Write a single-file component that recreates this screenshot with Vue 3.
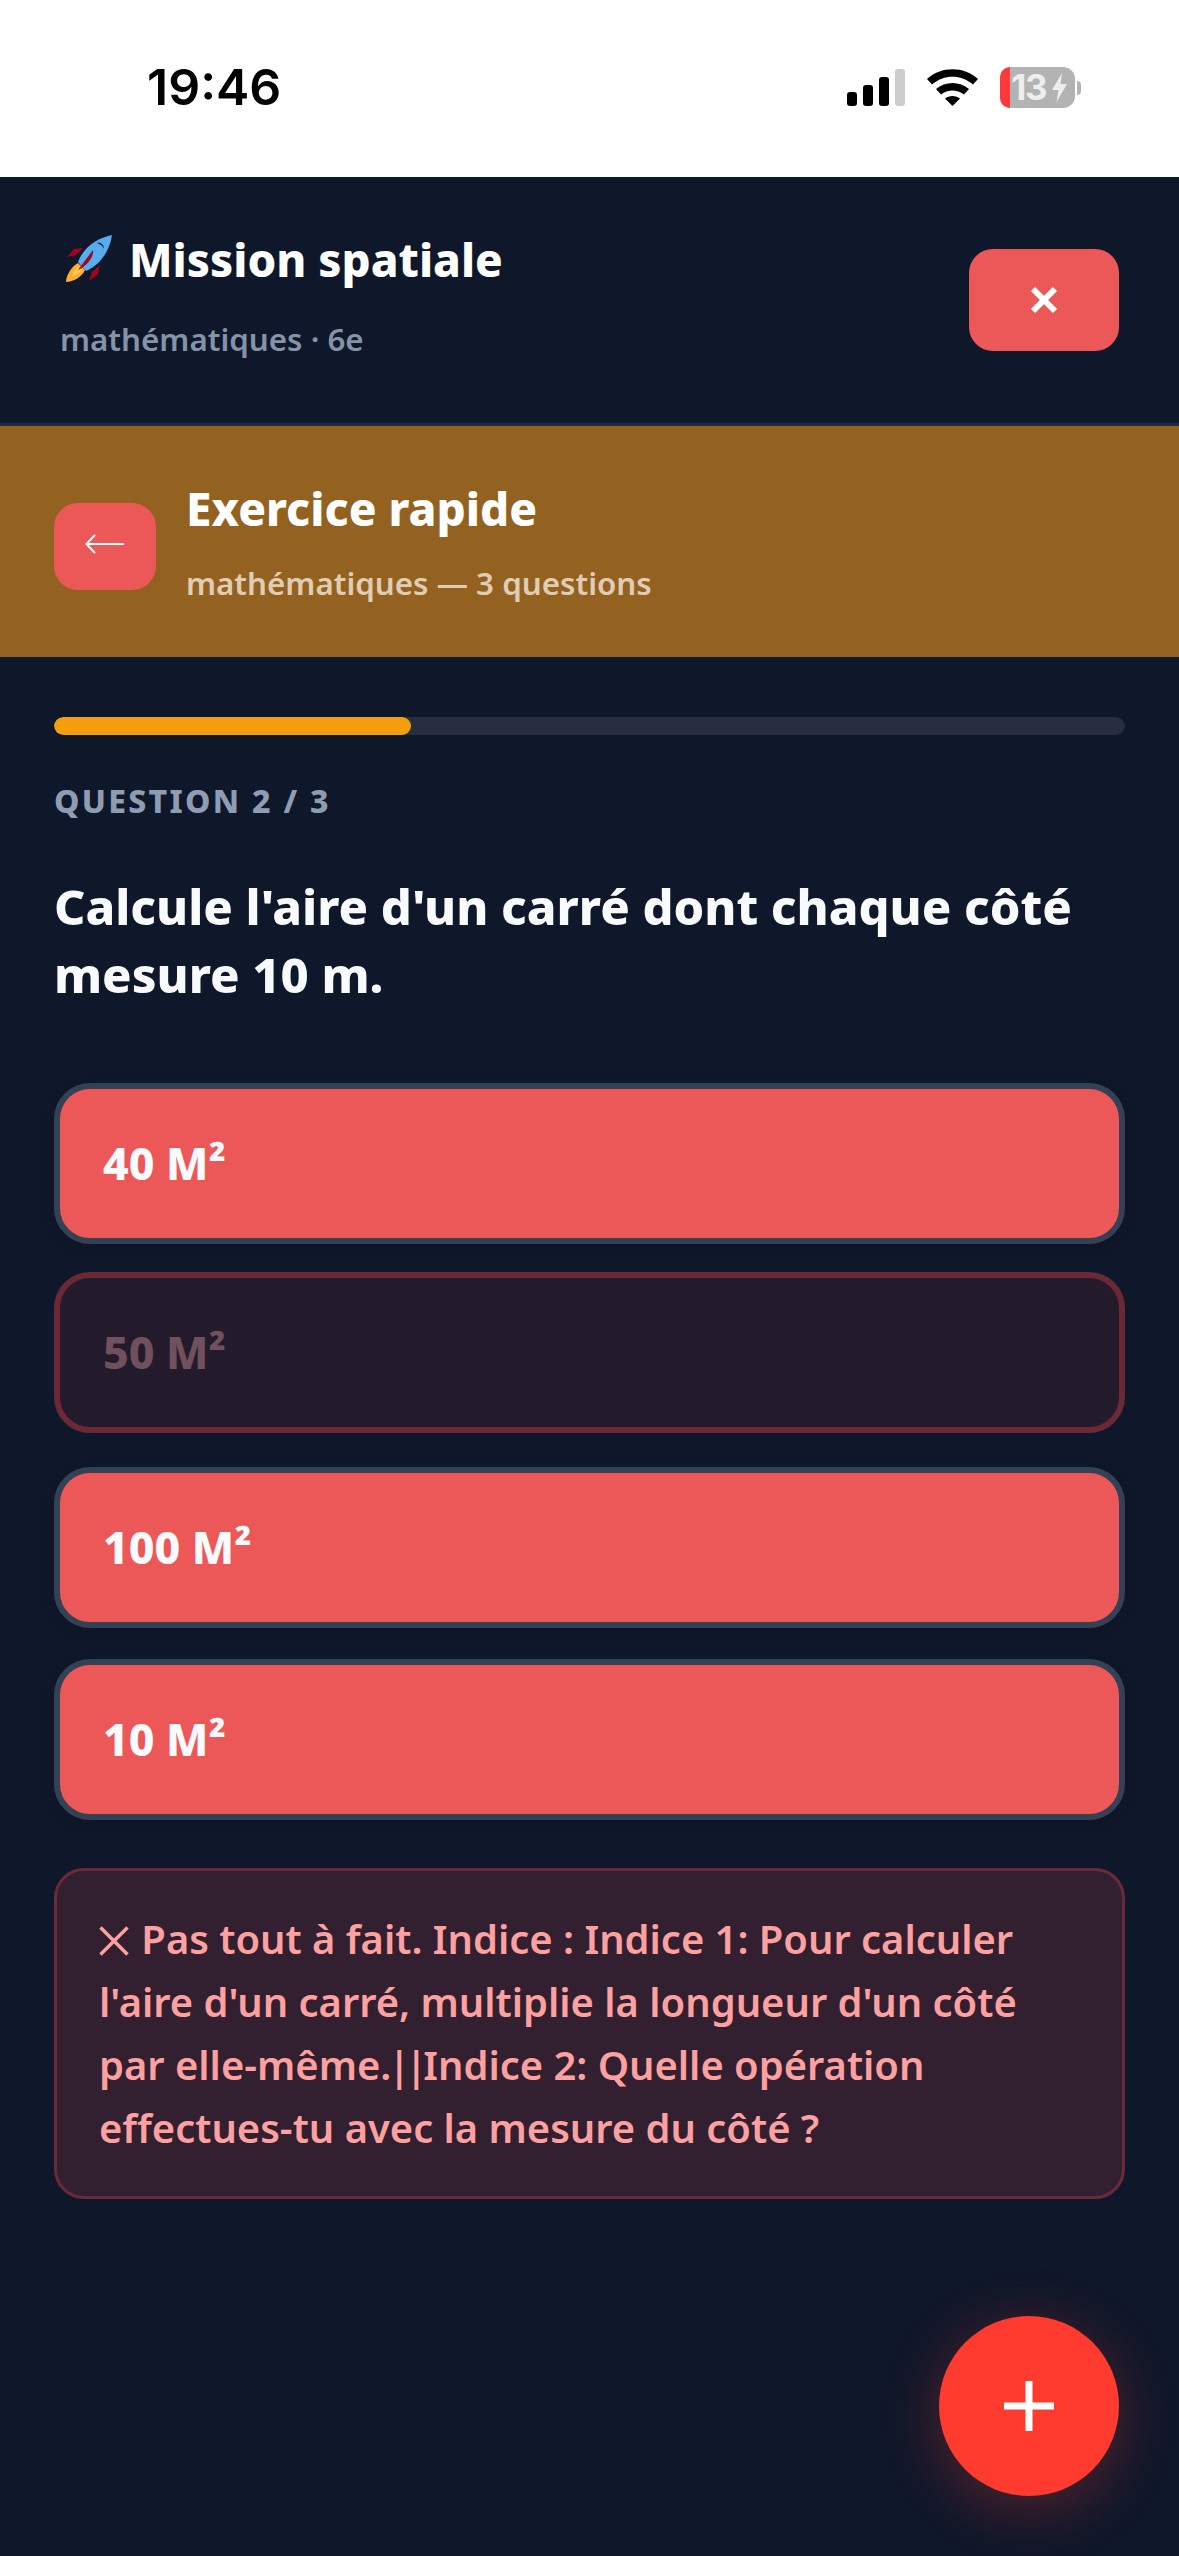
<template>
    <div class="screen">
        <header class="status-bar">
            <span class="time">19:46</span>
            <div class="status-icons">
                <svg class="signal" width="58" height="37" viewBox="0 0 58 37">
                    <rect x="0" y="23" width="10" height="14" rx="3" fill="#000" />
                    <rect x="16" y="16" width="10" height="21" rx="3" fill="#000" />
                    <rect x="32" y="8" width="10" height="29" rx="3" fill="#000" />
                    <rect x="48" y="0" width="10" height="37" rx="3" fill="#ccc" />
                </svg>
                <svg class="wifi" width="51" height="37" viewBox="0 0 51 37">
                    <path d="M0 10 C14 -3 37 -3 51 10 L46 15.500 C34 5 17 5 5 15.500 Z" fill="#000" />
                    <path d="M9 20 C18 12 33 12 42 20 L37 25.500 C30 20 21 20 14 25.500 Z" fill="#000" />
                    <path d="M18 29.500 C22 26 29 26 33 29.500 L25.500 37 Z" fill="#000" />
                </svg>
                <div class="battery">
                    <div class="battery-body">
                        <span class="battery-level"></span>
                        <span class="battery-text">13</span>
                        <svg class="bolt" width="15" height="29" viewBox="0 0 15 29">
                            <path d="M10 0 L0 17 H6.500 L4.500 29 L15 11 H8.500 Z" fill="#eee" />
                        </svg>
                    </div>
                    <span class="battery-tip"></span>
                </div>
            </div>
        </header>

        <section class="top-bar">
            <div class="top-text">
                <h1 class="mission">
                    <svg class="rocket" width="48" height="48" viewBox="0 0 48 48">
                        <path d="M11 20 L2 22 L9 14 L18 13 Z" fill="#a0041e" />
                        <path d="M27 37 L24 46 L33 39 L35 30 Z" fill="#a0041e" />
                        <path d="M13 28 C7 31 1 40 1 47 C8 47 17 42 20 35 Z" fill="#ffac33" />
                        <path d="M13 31 C10 34 8 38 7 41 C11 40 15 38 17 35 Z" fill="#ffcc4d" />
                        <path d="M13 27 C19 11 33 3 47 0 C45 14 37 29 21 36 Z" fill="#55acee" />
                        <path d="M13 35 L28 15 C29 20 24 30 13 35 Z" fill="#a0041e" />
                        <path d="M32 8 C36 7 39 10 39 14 C38 11 35 9 32 8 Z" fill="#0f172a" />
                    </svg>
                    <span>Mission spatiale</span>
                </h1>
                <p class="subject">mathématiques · 6e</p>
            </div>
            <button class="close-btn" type="button">
                <svg width="28" height="28" viewBox="0 0 28 28">
                    <path d="M3 3 L25 25 M25 3 L3 25" stroke="#fff" stroke-width="6" />
                </svg>
            </button>
        </section>

        <section class="banner">
            <button class="back-btn" type="button">
                <svg width="40" height="20" viewBox="0 0 40 20" fill="none">
                    <path d="M39 10 H2 M10 1 L1.500 10 L10 19" stroke="#fff" stroke-width="2" />
                </svg>
            </button>
            <div class="banner-text">
                <h2 class="banner-title">Exercice rapide</h2>
                <p class="banner-sub">mathématiques — 3 questions</p>
            </div>
        </section>

        <main class="content">
            <div class="progress">
                <div class="progress-fill" :style="{ width: progress + '%' }"></div>
            </div>
            <p class="question-count">QUESTION 2 / 3</p>
            <h3 class="question">Calcule l'aire d'un carré dont chaque côté<br />mesure 10 m.</h3>

            <div class="options">
                <button
                    v-for="opt in options"
                    :key="opt.label"
                    type="button"
                    :class="['option', opt.state]"
                >
                    {{ opt.label }}
                </button>
            </div>

            <div class="hint">
                <svg class="cross" width="30" height="30" viewBox="0 0 30 30">
                    <path d="M1.500 1.500 L28.500 28.500 M28.500 1.500 L1.500 28.500" stroke="#fda0a0" stroke-width="3.500" />
                </svg> Pas tout à fait. Indice : Indice 1: Pour calculer<br />
                l'aire d'un carré, multiplie la longueur d'un côté<br />
                par elle-même.<span class="bars">||</span>Indice 2: Quelle opération<br />
                effectues-tu avec la mesure du côté ?
            </div>
        </main>

        <button class="fab" type="button">
            <svg width="50" height="50" viewBox="0 0 50 50">
                <path d="M25 0 V50 M0 25 H50" stroke="#fff" stroke-width="7" />
            </svg>
        </button>
    </div>
</template>

<script setup>
const progress = 33.33;

const options = [
    { label: '40 M²', state: 'wrong' },
    { label: '50 M²', state: 'dimmed' },
    { label: '100 M²', state: 'wrong third' },
    { label: '10 M²', state: 'wrong fourth' },
];
</script>

<style>
html,
body {
    margin: 0;
    background: #0f172a;
}
</style>

<style scoped>
.screen {
    position: relative;
    width: 1179px;
    height: 2556px;
    overflow: hidden;
    background: #0f172a;
    font-family: 'Noto Sans', Lato, sans-serif;
    color: #fff;
}

.status-bar {
    height: 177px;
    background: #fff;
    display: flex;
    justify-content: space-between;
    align-items: flex-start;
    padding: 62px 98px 0 147px;
    box-sizing: border-box;
}

.time {
    font-family: Inter, sans-serif;
    font-weight: 600;
    font-size: 50px;
    line-height: 50px;
    color: #000;
}

.status-icons {
    display: flex;
    align-items: center;
    gap: 22px;
    margin-top: 5px;
}

.battery {
    display: flex;
    align-items: center;
    gap: 2px;
}

.battery-body {
    position: relative;
    width: 75px;
    height: 41px;
    border-radius: 12px;
    background: #b3b3b3;
    display: flex;
    align-items: center;
    justify-content: flex-end;
    gap: 6px;
    padding-right: 8px;
    box-sizing: border-box;
}

.battery-level {
    position: absolute;
    left: 0;
    top: 0;
    bottom: 0;
    width: 10px;
    border-radius: 12px 0 0 12px;
    background: #ff383c;
}

.battery-text {
    position: relative;
    font-family: Inter, sans-serif;
    font-weight: 700;
    font-size: 35px;
    line-height: 41px;
    letter-spacing: -1.500px;
    color: #eee;
}

.battery-tip {
    width: 4px;
    height: 14px;
    background: #b3b3b3;
    border-radius: 0 7px 7px 0;
}

.top-bar {
    height: 249px;
    display: flex;
    justify-content: space-between;
    align-items: flex-start;
    padding: 0 60px;
    box-sizing: border-box;
    border-bottom: 3px solid #1e293b;
}

.mission {
    margin: 53px 0 0;
    display: flex;
    align-items: center;
    gap: 16px;
    font-size: 45.700px;
    line-height: 58px;
    font-weight: 800;
}

.rocket {
    flex: none;
    margin-left: 5px;
}

.subject {
    margin: 31px 0 0;
    font-size: 31.300px;
    line-height: 40px;
    font-weight: 600;
    color: #8593a8;
}

.close-btn {
    margin-top: 72px;
    width: 150px;
    height: 102px;
    border: 0;
    border-radius: 24px;
    background: #ec5858;
    display: flex;
    align-items: center;
    justify-content: center;
    padding: 0;
}

.banner {
    height: 231px;
    background: #946220;
    display: flex;
    align-items: flex-start;
    gap: 30px;
    padding: 0 54px;
    box-sizing: border-box;
}

.back-btn {
    margin-top: 77px;
    width: 102px;
    height: 87px;
    border: 0;
    border-radius: 24px;
    background: #ec5858;
    display: flex;
    align-items: center;
    justify-content: center;
    padding: 0 0 6px;
}

.banner-title {
    margin: 53px 0 0;
    font-size: 45.900px;
    line-height: 58px;
    font-weight: 800;
}

.banner-sub {
    margin: 26px 0 0;
    font-size: 31.300px;
    line-height: 40px;
    font-weight: 600;
    color: #e0cdb5;
}

.content {
    padding: 60px 54px 0;
}

.progress {
    height: 18px;
    border-radius: 9px;
    background: #262d3f;
    overflow: hidden;
}

.progress-fill {
    height: 100%;
    border-radius: 9px;
    background: #f59e0b;
}

.question-count {
    margin: 46px 0 0;
    font-size: 32px;
    line-height: 40px;
    font-weight: 800;
    letter-spacing: 2.300px;
    color: #8f9db2;
}

.question {
    margin: 51px 0 0;
    font-size: 48.800px;
    line-height: 68px;
    font-weight: 800;
    color: #f8fafc;
}

.options {
    margin-top: 75px;
    display: flex;
    flex-direction: column;
    gap: 28px;
}

.option {
    height: 161px;
    border: 6px solid #334155;
    border-radius: 36px;
    background: #ec5858;
    box-sizing: border-box;
    padding: 0 0 2px 43px;
    text-align: left;
    font-family: inherit;
    font-size: 44.500px;
    font-weight: 800;
    color: #f8fafc;
    box-shadow: 0 4px 16px rgba(0, 0, 0, 0.15);
}

.option.dimmed {
    background: #231a2c;
    border-color: #6b2935;
    color: #6f505c;
    box-shadow: none;
}

.option.third {
    margin-top: 6px;
}

.option.fourth {
    margin-top: 3px;
}

.hint {
    margin-top: 48px;
    padding: 36px 42px 37px;
    border: 3px solid #6b2a38;
    border-radius: 30px;
    background: #321f30;
    font-size: 39.900px;
    line-height: 63px;
    font-weight: 600;
    color: #fda0a0;
    white-space: nowrap;
}

.bars {
    letter-spacing: -5px;
    margin: 0 1px 0 -3px;
}

.cross {
    margin-right: 2px;
    vertical-align: -2px;
}

.fab {
    position: absolute;
    left: 939px;
    top: 2316px;
    width: 180px;
    height: 180px;
    border: 0;
    border-radius: 50%;
    background: #ff3b30;
    display: flex;
    align-items: center;
    justify-content: center;
    padding: 0;
    box-shadow: 0 12px 60px rgba(255, 59, 48, 0.3);
}
</style>
